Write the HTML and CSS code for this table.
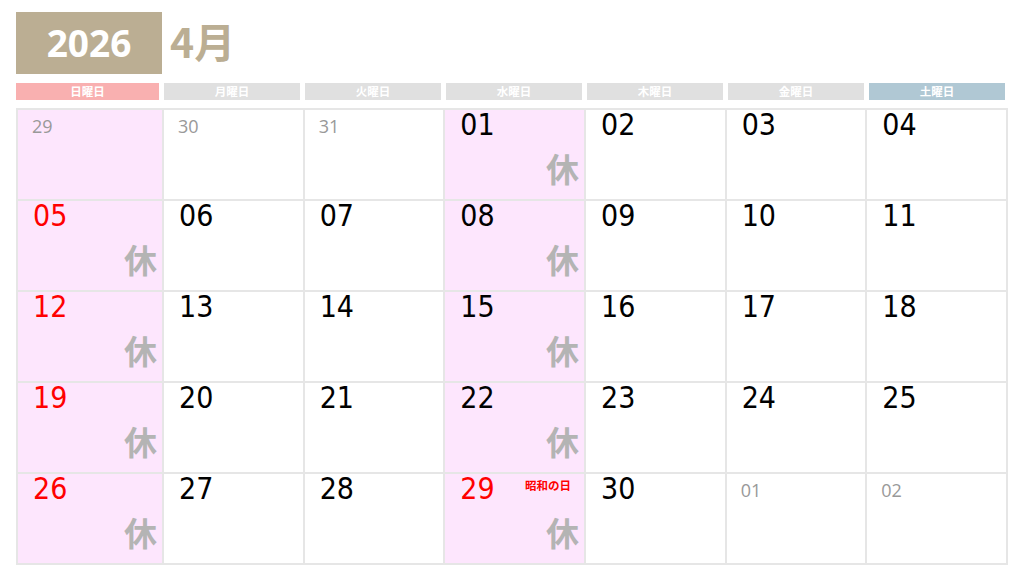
FILE: index.html
```html
<!DOCTYPE html>
<html lang="ja">
<head>
<meta charset="utf-8">
<title>2026年4月 カレンダー</title>
<link rel="stylesheet" href="styles.css">
</head>
<body>
<div class="page">
  <div class="title">
    <div class="year">2026</div>
    <div class="month">4月</div>
  </div>
  <div class="weekdays">
    <div class="wd sun">日曜日</div>
    <div class="wd">月曜日</div>
    <div class="wd">火曜日</div>
    <div class="wd">水曜日</div>
    <div class="wd">木曜日</div>
    <div class="wd">金曜日</div>
    <div class="wd sat">土曜日</div>
  </div>
  <div class="grid">
    <div class="cell off-day"><span class="num other">29</span></div>
    <div class="cell"><span class="num other">30</span></div>
    <div class="cell"><span class="num other">31</span></div>
    <div class="cell off-day"><span class="num">01</span><span class="rest">休</span></div>
    <div class="cell"><span class="num">02</span></div>
    <div class="cell"><span class="num">03</span></div>
    <div class="cell"><span class="num">04</span></div>

    <div class="cell off-day"><span class="num red">05</span><span class="rest">休</span></div>
    <div class="cell"><span class="num">06</span></div>
    <div class="cell"><span class="num">07</span></div>
    <div class="cell off-day"><span class="num">08</span><span class="rest">休</span></div>
    <div class="cell"><span class="num">09</span></div>
    <div class="cell"><span class="num">10</span></div>
    <div class="cell"><span class="num">11</span></div>

    <div class="cell off-day"><span class="num red">12</span><span class="rest">休</span></div>
    <div class="cell"><span class="num">13</span></div>
    <div class="cell"><span class="num">14</span></div>
    <div class="cell off-day"><span class="num">15</span><span class="rest">休</span></div>
    <div class="cell"><span class="num">16</span></div>
    <div class="cell"><span class="num">17</span></div>
    <div class="cell"><span class="num">18</span></div>

    <div class="cell off-day"><span class="num red">19</span><span class="rest">休</span></div>
    <div class="cell"><span class="num">20</span></div>
    <div class="cell"><span class="num">21</span></div>
    <div class="cell off-day"><span class="num">22</span><span class="rest">休</span></div>
    <div class="cell"><span class="num">23</span></div>
    <div class="cell"><span class="num">24</span></div>
    <div class="cell"><span class="num">25</span></div>

    <div class="cell off-day"><span class="num red">26</span><span class="rest">休</span></div>
    <div class="cell"><span class="num">27</span></div>
    <div class="cell"><span class="num">28</span></div>
    <div class="cell off-day">
      <div class="top"><span class="num red">29</span><span class="holiday">昭和の日</span></div>
      <span class="rest">休</span>
    </div>
    <div class="cell"><span class="num">30</span></div>
    <div class="cell"><span class="num other">01</span></div>
    <div class="cell"><span class="num other">02</span></div>
  </div>
</div>
</body>
</html>
```

FILE: styles.css
```css
html, body {
  margin: 0;
  padding: 0;
  background: #ffffff;
}

.page {
  width: 992px;
  padding: 12px 0 0 16px;
  font-family: "Noto Sans CJK JP", "Noto Sans", sans-serif;
}

.title {
  display: flex;
  align-items: center;
  height: 62px;
}

.year {
  width: 146px;
  height: 62px;
  background: #bbae93;
  color: #ffffff;
  font-family: "Open Sans", "Noto Sans", sans-serif;
  font-weight: 700;
  font-size: 37px;
  line-height: 62px;
  text-align: center;
}

.month {
  margin-left: 8px;
  color: #bbae93;
  font-family: "Noto Sans CJK JP", sans-serif;
  font-weight: 700;
  font-size: 41px;
  line-height: 62px;
  margin-top: -6px;
}

.weekdays {
  display: grid;
  grid-template-columns: 146px repeat(6, 141px);
  margin-top: 9px;
  height: 17px;
}

.wd {
  margin: 0 3px 0 2px;
  background: #e0e0e0;
  color: #ffffff;
  font-size: 11.5px;
  font-weight: 700;
  line-height: 17px;
  text-align: center;
}

.wd.sun {
  margin-left: 0;
  background: #f9b0b0;
}

.wd.sat {
  background: #b0c8d4;
}

.grid {
  margin-top: 8px;
  display: grid;
  grid-template-columns: 144px repeat(6, 1fr);
  grid-auto-rows: 89px;
  gap: 2px;
  padding: 2px;
  background: #e6e6e6;
}

.cell {
  background: #ffffff;
  display: flex;
  flex-direction: column;
  align-items: flex-start;
  min-width: 0;
}

.cell.off-day {
  background: #fde6fd;
}

.top {
  display: flex;
  align-self: stretch;
  align-items: flex-start;
}

.num {
  padding: 0 0 0 15px;
  font-family: "DejaVu Sans Condensed", "DejaVu Sans", sans-serif;
  font-size: 30px;
  line-height: 30px;
  color: #000000;
}

.num.red {
  color: #ff0000;
}

.num.other {
  padding: 4px 0 0 14px;
  font-family: "Open Sans", "Noto Sans", sans-serif;
  font-size: 18px;
  line-height: 24px;
  color: #999999;
}

.holiday {
  margin-left: auto;
  margin-right: 13px;
  margin-top: 3px;
  color: #ff0000;
  font-size: 11.5px;
  font-weight: 700;
  line-height: 16px;
}

.rest {
  margin-top: auto;
  align-self: flex-end;
  margin-right: 5px;
  margin-bottom: 11px;
  color: #b4b4b4;
  font-size: 33px;
  font-weight: 700;
  line-height: 40px;
}
```
